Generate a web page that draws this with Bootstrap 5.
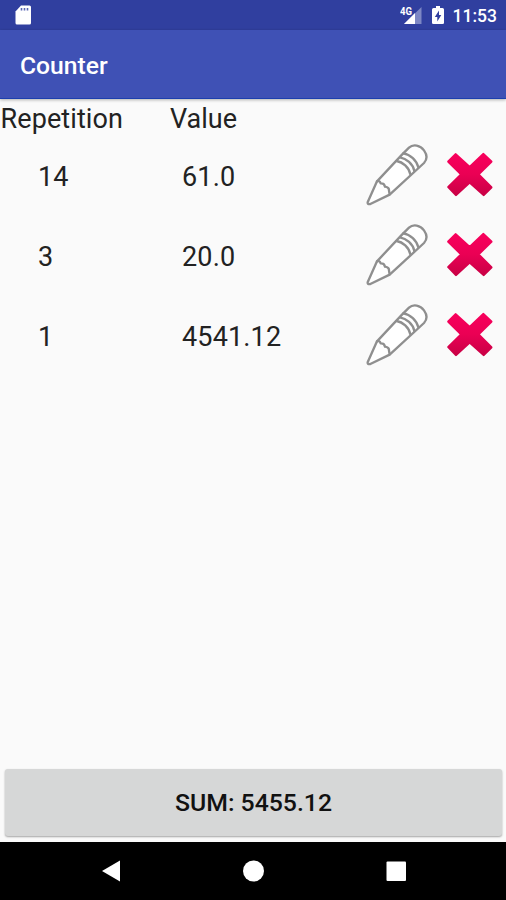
<!DOCTYPE html>
<html lang="en">
<head>
<meta charset="utf-8">
<meta name="viewport" content="width=device-width, initial-scale=1">
<title>Counter</title>
<link href="https://cdn.jsdelivr.net/npm/bootstrap@5.3.0/dist/css/bootstrap.min.css" rel="stylesheet">
<style>
body{font-family:Roboto,sans-serif;background:#fafafa;color:#222;height:900px;overflow:hidden}
svg{display:block;flex:none}
.status{height:30px;background:#303f9f;padding:0 9px 0 15px}
.clock{font-size:17.500px;font-weight:500;line-height:30px;padding-top:2px;margin-left:9px}
.battery{margin-left:10px}
.appbar{height:69px;background:#3f51b5;border-bottom:1px solid #1c3fae;padding:5px 20px 0;box-shadow:0 1px 3px rgba(0,0,0,.3)}
.title{font-size:24.700px;font-weight:500;line-height:1}
.txt{font-size:27px;line-height:36px}
.heads{height:36px;padding-top:2px}
.c1{width:170px}
.heads .c1{padding-left:.5px;letter-spacing:.1px}
.entry{height:80px;padding-right:12px}
.entry .c1{padding-left:38px}
.entry .c2{padding-left:12px;letter-spacing:.15px}
.entry .txt{padding-top:4px}
.sum{height:67px;margin:0 4px 6px 5px;padding:1px 0 0;background:#d6d7d7;border:0;border-radius:3px;font-size:24.800px;font-weight:500;color:#111;box-shadow:0 1px 2px rgba(0,0,0,.35)}
.sum:hover{background:#cbcccc}
.sysnav{height:58px;background:#000}
.edit{margin:0 16px 1px 0}
</style>
</head>
<body class="d-flex flex-column">
<svg width="0" height="0" class="position-absolute">
<defs>
<linearGradient id="red" x1="0" y1="0" x2="0" y2="1"><stop offset="0" stop-color="#f8005c"/><stop offset=".5" stop-color="#ea0054"/><stop offset="1" stop-color="#c90045"/></linearGradient>
<symbol id="pencil" viewBox="6 6 192 192">
<g fill="none" stroke="#8f8f8f" stroke-width="7" stroke-linejoin="round" stroke-linecap="round">
<path fill="#fff" d="M14 184 L42 121 L117 41 L138 20 C151 8 172 13 183 28 C193 42 192 56 183 66 L80 161 L22 189 Q13 191 14 184Z"/>
<path d="M42 121 Q50 118 53 127 Q64 126 66 137 Q79 139 78 149 L80 160"/>
<path d="M101 60 C119 63 138 79 142 100"/><path d="M111 49 C130 52 150 69 154 90"/><path d="M121 37 C142 40 161 58 166 79"/>
</g></symbol>
<symbol id="cross" viewBox="6 9 147 144">
<path fill="url(#red)" stroke="url(#red)" stroke-width="7" stroke-linejoin="round" d="M38 19 L80 57 L121 18 L145 41 L106 79 L145 118 L122 141 L80 103 L39 141 L16 117 L55 79 L16 41Z"/></symbol>
</defs></svg>

<header>
<div class="status d-flex align-items-center text-white">
<svg width="17" height="20" viewBox="0 0 17 20"><path fill="#fff" d="M6 .5H14.5Q16 .5 16 2V18Q16 19.500 14.500 19.500H2Q.5 19.500 .5 18V6.500Z"/><path d="M6.500 3V5.500M9.500 3V5.500M12.500 3V5.500" stroke="#5965b3" stroke-width="1.600"/></svg>
<svg class="ms-auto" width="22" height="20" viewBox="0 0 22 20"><path fill="#7d87c4" d="M21.500 2V19H4Z"/><path fill="#fff" d="M15 8V19H4Z"/><text x="0" y="10" font-size="10.500" font-weight="700" fill="#fff" textLength="12" lengthAdjust="spacingAndGlyphs">4G</text></svg>
<svg class="battery" width="12" height="20" viewBox="0 0 12 20"><path fill="#fff" d="M4 1H8V3H10.500Q12 3 12 4.500V18Q12 19 10.500 19H1.500Q0 19 0 18V4.500Q0 3 1.500 3H4Z"/><path fill="#303f9f" d="M7 5.500L2.800 12H5.300V16.500L9.300 10H7Z"/></svg>
<span class="clock">11:53</span>
</div>
<div class="appbar d-flex align-items-center text-white"><h1 class="title m-0">Counter</h1></div>
</header>

<main class="flex-grow-1 d-flex flex-column">
<div class="heads d-flex txt"><div class="c1">Repetition</div><div class="c2">Value</div></div>
<div class="entry d-flex align-items-center"><div class="c1 txt">14</div><div class="c2 txt flex-grow-1">61.0</div><svg class="edit" width="64" height="64"><use href="#pencil"/></svg><svg width="49" height="48"><use href="#cross"/></svg></div>
<div class="entry d-flex align-items-center"><div class="c1 txt">3</div><div class="c2 txt flex-grow-1">20.0</div><svg class="edit" width="64" height="64"><use href="#pencil"/></svg><svg width="49" height="48"><use href="#cross"/></svg></div>
<div class="entry d-flex align-items-center"><div class="c1 txt">1</div><div class="c2 txt flex-grow-1">4541.12</div><svg class="edit" width="64" height="64"><use href="#pencil"/></svg><svg width="49" height="48"><use href="#cross"/></svg></div>
<button type="button" class="sum btn mt-auto">SUM: 5455.12</button>
</main>

<nav class="sysnav">
<svg width="506" height="58" viewBox="0 0 506 58" fill="#fff"><path d="M102 29L120 18.500V39.500Z"/><circle cx="253.500" cy="29" r="10.500"/><rect x="386.500" y="19.500" width="19.500" height="19.500" rx="1"/></svg>
</nav>
<script src="https://cdn.jsdelivr.net/npm/bootstrap@5.3.0/dist/js/bootstrap.bundle.min.js"></script>
</body>
</html>
